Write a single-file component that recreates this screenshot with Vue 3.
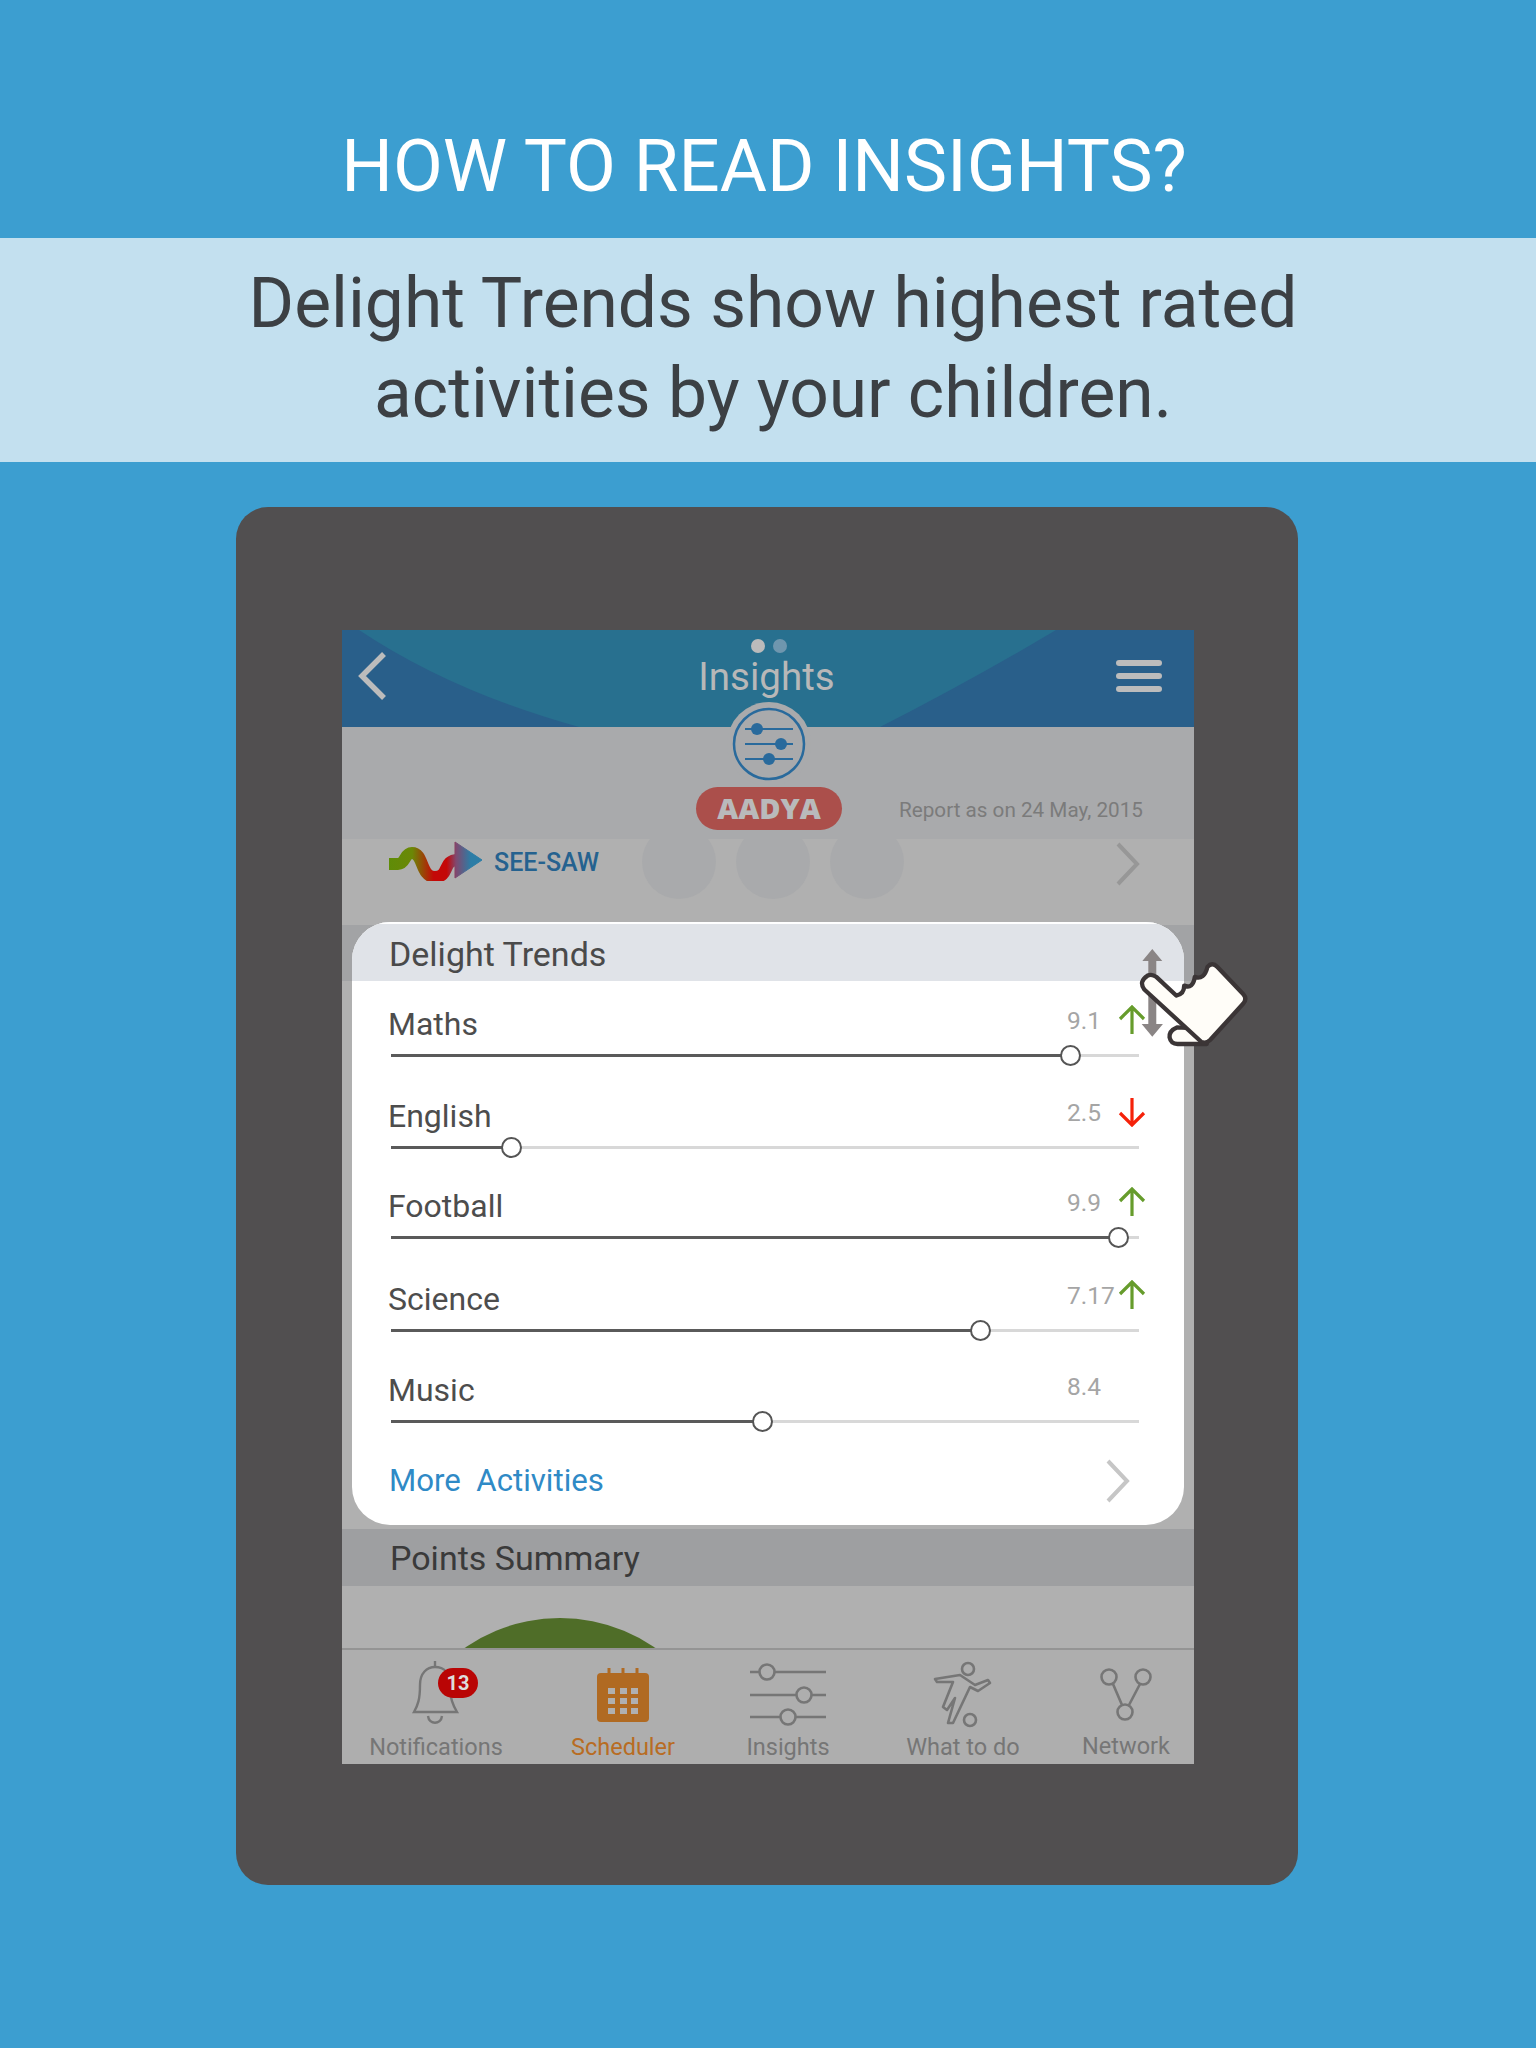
<script setup>
const activities = [
  { name: 'Maths', value: '9.1', trend: 'up', pct: 90.8, h: 76 },
  { name: 'English', value: '2.5', trend: 'down', pct: 16, h: 92 },
  { name: 'Football', value: '9.9', trend: 'up', pct: 97.2, h: 90 },
  { name: 'Science', value: '7.17', trend: 'up', pct: 78.7, h: 93 },
  { name: 'Music', value: '8.4', trend: '', pct: 49.6, h: 91 },
]

const tabs = [
  { key: 'bell', label: 'Notifications' },
  { key: 'cal', label: 'Scheduler' },
  { key: 'sliders', label: 'Insights' },
  { key: 'player', label: 'What to do' },
  { key: 'net', label: 'Network' },
]
</script>

<template>
  <div class="page">
    <div class="title">HOW TO READ INSIGHTS?</div>
    <div class="band">Delight Trends show highest rated<br />activities by your children.</div>

    <div class="tablet">
      <div class="screen">
        <header class="head">
          <svg class="head-bg" width="852" height="97" viewBox="0 0 852 97">
            <rect width="852" height="97" fill="#295f8a" />
            <path d="M17 0 Q110 62 237 97 L538 97 Q630 50 714 0 Z" fill="#28708f" />
          </svg>
          <svg class="back" width="32" height="50" viewBox="0 0 32 50">
            <path d="M27 3 L5 25 L27 47" fill="none" stroke="#bcbcbc" stroke-width="5.5" />
          </svg>
          <div class="dots"><i class="dot"></i><i class="dot dot-off"></i></div>
          <div class="head-title">Insights</div>
          <div class="burger"><i></i><i></i><i></i></div>
        </header>

        <svg class="logo-badge" width="86" height="86" viewBox="0 0 86 86">
          <circle cx="43" cy="43" r="42" fill="#a9aaac" />
          <circle cx="43" cy="43" r="35" fill="none" stroke="#296a9c" stroke-width="2.5" />
          <g stroke="#296a9c" stroke-width="1.8">
            <path d="M19 28 H67 M19 43 H67 M19 58 H67" />
          </g>
          <g fill="#296a9c">
            <circle cx="31" cy="28" r="6" />
            <circle cx="55" cy="43" r="6" />
            <circle cx="43" cy="58" r="6" />
          </g>
        </svg>

        <div class="sub">
          <div class="pill">AADYA</div>
          <div class="report">Report as on 24 May, 2015</div>
        </div>

        <div class="seesaw">
          <svg class="seesaw-logo" width="96" height="40" viewBox="8 6 96 40">
            <defs>
              <linearGradient id="wave" gradientUnits="userSpaceOnUse" x1="9" y1="0" x2="102" y2="0">
                <stop offset="0" stop-color="#5f8c08" />
                <stop offset="0.25" stop-color="#6b8806" />
                <stop offset="0.48" stop-color="#c40808" />
                <stop offset="0.62" stop-color="#c40808" />
                <stop offset="0.72" stop-color="#80486f" />
                <stop offset="0.88" stop-color="#2c7da6" />
              </linearGradient>
            </defs>
            <path d="M9 29 H18 C26 29 24 18 32 18 C44 18 40 42 55 42 C70 42 62 25 78 25" fill="none" stroke="url(#wave)" stroke-width="12" />
            <path d="M75 7 L102 25 L75 43 Z" fill="url(#wave)" stroke="url(#wave)" stroke-width="1" stroke-linejoin="round" />
          </svg>
          <span class="seesaw-name">SEE-SAW</span>
          <div class="bubbles"><i></i><i></i><i></i></div>
          <svg class="chev" width="26" height="44" viewBox="0 0 26 44">
            <path d="M3 2 L22 22 L3 42" fill="none" stroke="#979797" stroke-width="4" />
          </svg>
        </div>

        <div class="under"><div class="under-bar"></div></div>

        <div class="card">
          <div class="card-head">Delight Trends</div>
          <div class="rows">
            <div v-for="a in activities" :key="a.name" class="row" :style="{ height: a.h + 'px' }">
              <div class="row-top">
                <span class="row-name">{{ a.name }}</span>
                <span class="row-val">{{ a.value }}</span>
                <svg class="trend" width="28" height="30" viewBox="0 0 28 30">
                  <path v-if="a.trend === 'up'" d="M14 29 V2 M2 14 L14 2 L26 14" fill="none" stroke="#669c2c" stroke-width="3.2" />
                  <path v-if="a.trend === 'down'" d="M14 1 V28 M2 16 L14 28 L26 16" fill="none" stroke="#f5220a" stroke-width="3.2" />
                </svg>
              </div>
              <div class="track">
                <div class="fill" :style="{ width: a.pct + '%' }"></div>
                <div class="thumb" :style="{ left: a.pct + '%' }"></div>
              </div>
            </div>
          </div>
          <div class="more">
            <span>More&nbsp; Activities</span>
            <svg width="26" height="44" viewBox="0 0 26 44">
              <path d="M3 2 L22 22 L3 42" fill="none" stroke="#c6c6c6" stroke-width="4" />
            </svg>
          </div>
        </div>

        <svg class="hand" width="113" height="103" viewBox="290 80 340 310">
          <path d="M336 86 L366 122 H348 V312 H368 L336 350 L304 312 H324 V122 H306 Z" fill="#8a8585" />
          <path d="M410 322 Q386 332 388 352 Q392 372 412 372 H500 L470 325 Z" fill="#fffdf8" stroke="#3b3536" stroke-width="13" stroke-linejoin="round" />
          <path d="M322 166 Q335 160 348 170 L408 226 Q432 222 432 196 Q458 208 464 170 Q492 180 502 140 Q516 124 532 140 L610 222 Q622 235 610 250 L510 360 Q498 372 484 366 L312 208 Q294 184 322 166 Z" fill="#fffdf8" stroke="#3b3536" stroke-width="13" stroke-linejoin="round" />
        </svg>

        <div class="points">Points Summary</div>
        <div class="chart">
          <svg class="arc" width="200" height="30" viewBox="0 0 200 30">
            <circle cx="100" cy="167" r="167" fill="#4f6d28" />
          </svg>
        </div>

        <nav class="tabs">
          <div v-for="t in tabs" :key="t.key" class="tab" :class="{ 'tab-on': t.key === 'cal', 'tab-net': t.key === 'net' }">
            <div class="tab-icon">
              <svg v-if="t.key === 'bell'" class="ic-bell" width="90" height="80" viewBox="0 0 90 80">
                <g fill="none" stroke="#767676" stroke-width="2.4">
                  <path d="M35 6 V12" />
                  <path d="M14 57 C18 50 20 44 20 30 C20 18 27 12 35 12 C44 12 50 18 50 30 C50 44 53 50 57 57 Z" />
                  <path d="M28 61 C29 70 41 70 42 61" />
                </g>
                <rect x="38" y="13" width="40" height="30" rx="15" fill="#b90505" />
                <text x="58" y="35" class="badge-num" text-anchor="middle">13</text>
              </svg>
              <svg v-else-if="t.key === 'cal'" width="52" height="54" viewBox="0 0 52 54">
                <path d="M12 0 V6 M26 0 V6 M40 0 V6" stroke="#b06a22" stroke-width="3" />
                <rect x="0" y="5" width="52" height="49" rx="4" fill="#b06a22" />
                <g fill="#b0b0b0">
                  <rect x="11" y="20" width="7" height="6" /><rect x="23" y="20" width="7" height="6" /><rect x="34" y="20" width="7" height="6" />
                  <rect x="11" y="30" width="7" height="6" /><rect x="23" y="30" width="7" height="6" /><rect x="34" y="30" width="7" height="6" />
                  <rect x="11" y="40" width="7" height="6" /><rect x="23" y="40" width="7" height="6" /><rect x="34" y="40" width="7" height="6" />
                </g>
              </svg>
              <svg v-else-if="t.key === 'sliders'" width="76" height="64" viewBox="0 0 76 64">
                <path d="M0 9 H76 M0 32 H76 M0 54 H76" stroke="#767676" stroke-width="2.6" />
                <g fill="#aeaeae" stroke="#767676" stroke-width="2.6">
                  <circle cx="17" cy="9" r="7.5" /><circle cx="54" cy="32" r="7.5" /><circle cx="38" cy="54" r="7.5" />
                </g>
              </svg>
              <svg v-else-if="t.key === 'player'" class="ic-player" width="90" height="80" viewBox="0 0 90 80">
                <g fill="none" stroke="#767676" stroke-width="2.6" stroke-linejoin="round">
                  <circle cx="48" cy="14" r="6" />
                  <circle cx="50" cy="65" r="6" />
                  <path d="M15 24 L40 20 L55 30 L68 25 L70 28 L58 36 L50 32 L33 68 L28 68 L35 43 L27 55 L23 52 L33 27 L17 27 Z" />
                </g>
              </svg>
              <svg v-else width="52" height="54" viewBox="0 0 52 54">
                <g fill="none" stroke="#767676" stroke-width="2.6">
                  <circle cx="9" cy="9" r="7.5" />
                  <circle cx="43" cy="9" r="7.5" />
                  <circle cx="25" cy="44" r="7.5" />
                  <path d="M13 16 L22 37 M40 16 L29 37" />
                </g>
              </svg>
            </div>
            <div class="tab-label">{{ t.label }}</div>
          </div>
        </nav>
      </div>
    </div>
  </div>
</template>

<style scoped>
.page {
  width: 1536px;
  height: 2048px;
  background: #3c9ed0;
  font-family: Roboto, "Liberation Sans", sans-serif;
  overflow: hidden;
}

.title {
  height: 238px;
  padding: 122px 8px 0 0;
  box-sizing: border-box;
  text-align: center;
  color: #fff;
  font-size: 72.5px;
  line-height: 90px;
}

.band {
  height: 224px;
  padding: 21px 0 0 10px;
  box-sizing: border-box;
  background: #c3e0ef;
  text-align: center;
  color: #3c4044;
  font-size: 69.5px;
  line-height: 90px;
}

.tablet {
  width: 1062px;
  height: 1378px;
  margin: 45px 0 0 236px;
  padding: 123px 0 0 106px;
  box-sizing: border-box;
  background: #514f50;
  border-radius: 32px;
}

.screen {
  position: relative;
  width: 852px;
  height: 1134px;
  background: #b0b0b0;
}

.head {
  position: relative;
  height: 97px;
  display: flex;
  align-items: flex-start;
  justify-content: space-between;
}

.head-bg {
  position: absolute;
  inset: 0;
}

.back {
  position: relative;
  margin: 21px 0 0 15px;
}

.dots {
  position: absolute;
  top: 9px;
  left: 409px;
  display: flex;
  gap: 8px;
}

.dot {
  width: 14px;
  height: 14px;
  border-radius: 50%;
  background: #bbb;
}

.dot-off {
  background: #6f96ae;
}

.head-title {
  position: absolute;
  left: 0;
  right: 0;
  top: 25px;
  text-align: center;
  color: #b8b8b8;
  font-size: 38.5px;
  line-height: 44px;
  padding-right: 3px;
  box-sizing: border-box;
}

.burger {
  position: relative;
  margin: 30px 32px 0 0;
  display: flex;
  flex-direction: column;
  gap: 7px;
}

.burger i {
  display: block;
  width: 46px;
  height: 6px;
  border-radius: 3px;
  background: #bcbcbc;
}

.logo-badge {
  position: absolute;
  left: 384px;
  top: 71px;
}

.sub {
  height: 112px;
  background: #a9aaac;
  display: flex;
  align-items: flex-start;
  padding: 60px 0 0 354px;
  box-sizing: border-box;
}

.pill {
  width: 146px;
  height: 43px;
  border-radius: 22px;
  background: #ab4f4b;
  color: #b9babb;
  font-family: "Open Sans", Roboto, sans-serif;
  font-weight: 800;
  font-size: 29px;
  line-height: 42px;
  text-align: center;
}

.report {
  margin: 8px 0 0 57px;
  color: #7b7b7b;
  font-size: 20.7px;
  line-height: 30px;
}

.seesaw {
  height: 86px;
  background: #b0b0b0;
  display: flex;
  align-items: flex-start;
  padding-left: 46px;
  box-sizing: border-box;
  overflow: hidden;
}

.seesaw-logo {
  margin-top: 2px;
  flex: none;
}

.seesaw-name {
  margin: 7px 0 0 10px;
  width: 104px;
  color: #25628f;
  font-size: 25px;
  font-weight: 500;
  line-height: 34px;
  white-space: nowrap;
}

.bubbles {
  display: flex;
  gap: 20px;
  margin: -14px 0 0 44px;
}

.bubbles i {
  width: 74px;
  height: 74px;
  border-radius: 50%;
  background: #a9aaac;
}

.chev {
  margin: 3px 53px 0 auto;
  flex: none;
}

.under {
  height: 604px;
}

.under-bar {
  height: 56px;
  background: #a2a3a5;
}

.card {
  position: absolute;
  left: 10px;
  right: 10px;
  top: 292px;
  height: 603px;
  background: #fff;
  border-radius: 38px;
  overflow: hidden;
}

.card-head {
  height: 59px;
  padding-left: 37px;
  background: #e0e3e8;
  border-top: 2px solid #fff;
  box-sizing: border-box;
  color: #4a4a4a;
  font-size: 34px;
  line-height: 60px;
}

.rows {
  padding: 0 45px 0 39px;
}

.row {
  display: flex;
  flex-direction: column;
  justify-content: flex-end;
}

.row-top {
  display: flex;
  align-items: flex-start;
  margin-left: -3px;
  margin-right: -7px;
  margin-bottom: 10px;
  height: 46px;
}

.row-name {
  flex: 1;
  color: #4d4d4d;
  font-size: 32px;
  line-height: 46px;
  margin-top: 3px;
}

.row-val {
  color: #a5a5a5;
  font-size: 24.5px;
  line-height: 30px;
  margin-top: 8px;
  width: 51px;
}

.trend {
  margin-top: 7px;
}

.track {
  position: relative;
  height: 3px;
  background: #d8d8d8;
}

.fill {
  height: 3px;
  background: #5a5a5a;
}

.thumb {
  position: absolute;
  top: -9px;
  width: 21px;
  height: 21px;
  margin-left: -10px;
  box-sizing: border-box;
  border: 2.5px solid #555;
  border-radius: 50%;
  background: #fff;
}

.more {
  display: flex;
  align-items: center;
  justify-content: space-between;
  padding: 35px 53px 0 37px;
  color: #2f8ac6;
  font-size: 31.2px;
  line-height: 46px;
}

.hand {
  position: absolute;
  left: 795px;
  top: 317px;
}

.points {
  height: 57px;
  padding-left: 48px;
  background: #9e9fa1;
  color: #3a3a3a;
  font-size: 34px;
  line-height: 59px;
}

.chart {
  height: 62px;
  display: flex;
  align-items: flex-end;
  padding-left: 118px;
}

.arc {
  display: block;
}

.tabs {
  height: 116px;
  border-top: 2px solid #949494;
  box-sizing: border-box;
  display: grid;
  grid-template-columns: 188px 186px 144px 206px 128px;
  background: #aeaeae;
}

.tab {
  display: flex;
  flex-direction: column;
  align-items: center;
}

.tab-icon {
  height: 90px;
  margin-bottom: -8px;
  display: flex;
  align-items: center;
  justify-content: center;
}

.ic-bell {
  margin-left: 18px;
}

.ic-player {
  margin-left: 4px;
}

.tab-label {
  color: #767676;
  font-size: 23.5px;
  line-height: 30px;
  white-space: nowrap;
}

.tab-on .tab-label {
  color: #b86c23;
}

.tab-net {
  padding-right: 8px;
}

.tab-net .tab-label {
  margin-top: -1px;
}

.badge-num {
  fill: #ddd;
  font-family: Roboto, sans-serif;
  font-size: 20px;
  font-weight: 700;
}
</style>
